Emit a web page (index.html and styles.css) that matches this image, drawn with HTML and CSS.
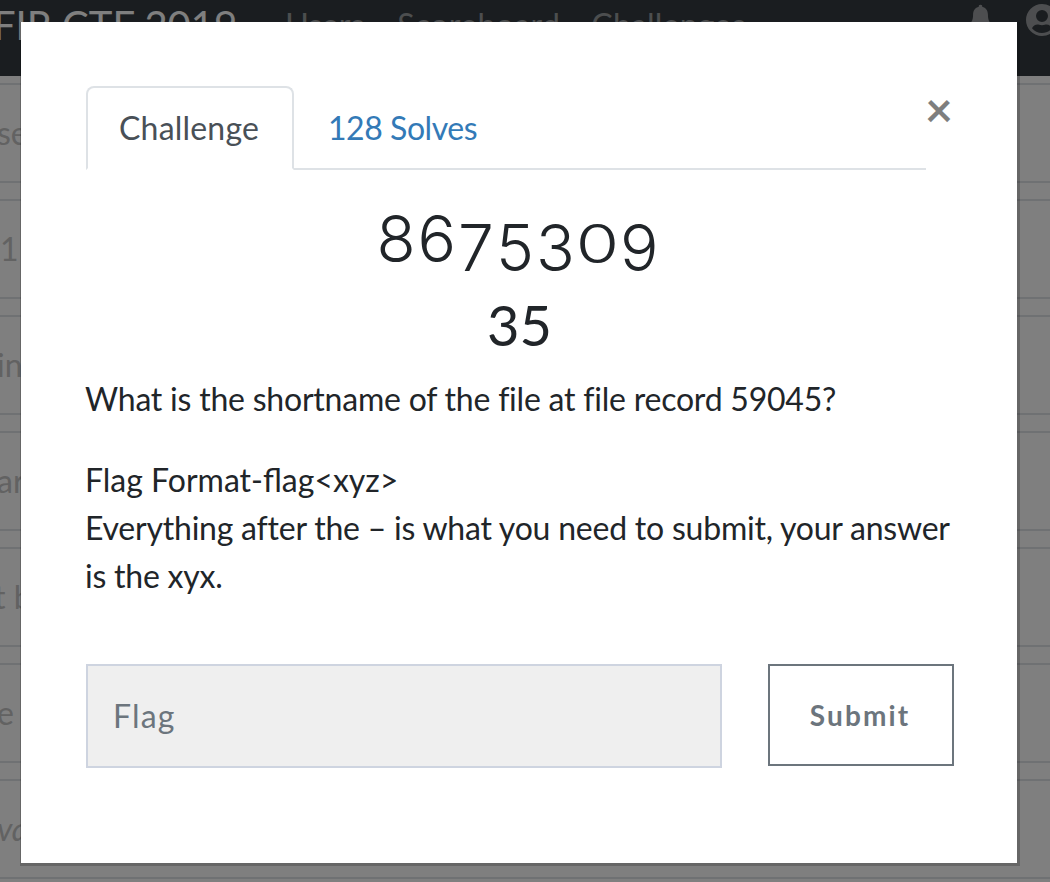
FILE: index.html
```
<!DOCTYPE html>
<html lang="en">
<head>
<meta charset="utf-8">
<title>FIR CTF 2019</title>
<link rel="stylesheet" href="styles.css">
</head>
<body>
<nav class="navbar">
  <span class="brand">FIR CTF 2019</span>
  <a class="nav-link">Users</a>
  <a class="nav-link nav-score">Scoreboard</a>
  <a class="nav-link nav-chal">Challenges</a>
  <span class="nav-icons">
    <svg class="icon-bell" viewBox="0 0 24 28" aria-hidden="true"><path d="M12 0a2 2 0 0 1 2 2.4c4 1 6.500 4.300 6.500 9.100 0 6 1.500 8 3.500 10H0c2-2 3.500-4 3.500-10 0-4.800 2.500-8.100 6.500-9.100A2 2 0 0 1 12 0z"/></svg>
    <svg class="icon-user" viewBox="0 0 32 32" aria-hidden="true"><path fill-rule="evenodd" d="M16 0a16 16 0 1 0 0 32 16 16 0 0 0 0-32zm0 6a6 6 0 1 1 0 12 6 6 0 0 1 0-12zm0 23c-4 0-7.600-1.800-10-4.700 1-2.300 3.200-3.800 5.500-3.800.5 0 1.200.1 1.700.3.900.3 1.800.5 2.800.5s1.900-.2 2.800-.5c.5-.2 1.200-.3 1.700-.3 2.300 0 4.500 1.500 5.500 3.800C23.600 27.200 20 29 16 29z"/></svg>
  </span>
</nav>
<main class="rows">
  <div class="row-first"></div>
  <div class="row"><span class="row-text">se</span></div>
  <div class="row"><span class="row-text row-num">11</span></div>
  <div class="row"><span class="row-text">in</span></div>
  <div class="row"><span class="row-text">ar</span></div>
  <div class="row"><span class="row-text row-tight">t b</span></div>
  <div class="row"><span class="row-text">e</span></div>
  <div class="row"><span class="row-text row-italic">va</span></div>
</main>
<div class="backdrop"></div>
<section class="modal">
  <button class="close" aria-label="Close">&times;</button>
  <ul class="tabs">
    <li class="tab tab-active">Challenge</li>
    <li class="tab tab-link">128 Solves</li>
  </ul>
  <h3 class="title"><span class="d-hi">8</span><span class="d-hi">6</span><span class="d-lo">7</span><span class="d-lo">5</span><span class="d-lo">3</span><span class="d-x">0</span><span class="d-lo">9</span></h3>
  <h4 class="points">35</h4>
  <div class="desc">
    <p>What is the shortname of the file at file record 59045?</p>
    <p><span class="flag-line">Flag Format-flag&lt;xyz&gt;</span><br>Everything after the – is what you need to submit, your answer is the xyx.</p>
  </div>
  <form class="flag-form">
    <input class="flag-input" type="text" placeholder="Flag">
    <button class="submit" type="button">Submit</button>
  </form>
</section>
</body>
</html>
```
FILE: styles.css
```
* { box-sizing: border-box; }
html, body { margin: 0; height: 882px; overflow: hidden; }
body { background: #fff; font-family: Lato, "Liberation Sans", sans-serif; color: #212529; }

.navbar { height: 76px; background: #343a40; display: flex; align-items: flex-start; padding-top: 1px; white-space: nowrap; color: rgba(255,255,255,.5); }
.brand { font-size: 40px; line-height: 48px; margin-left: -7px; color: #fff; }
.nav-link { font-size: 32px; line-height: 48px; }
.brand + .nav-link { margin-left: 48px; }
.nav-link + .nav-link { margin-left: 33px; }
.nav-score { letter-spacing: .4px; }
.nav-link.nav-chal { margin-left: 31px; letter-spacing: .2px; }
.nav-icons { margin-left: auto; display: flex; gap: 35px; margin-right: -8px; padding-top: 3px; }
.icon-bell { width: 21px; height: 26px; fill: currentColor; }
.icon-user { width: 32px; height: 32px; fill: currentColor; }

.rows { display: flex; flex-direction: column; gap: 16px; }
.row { height: 100px; border-top: 2px solid #dee2e6; border-bottom: 2px solid #dee2e6; font-size: 32px; color: #c4c4c4; padding-top: 28px; }
.row-first { height: 7px; margin-bottom: -16px; }
.row-text { display: block; margin-left: -3px; }
.row-num { margin-left: 0; }
.row-tight { margin-left: -6px; }
.row-italic { font-style: italic; }

.backdrop { position: fixed; inset: 0; background: rgba(0,0,0,.5); }
.modal { position: fixed; left: 20px; top: 22px; width: 1000px; height: 844px; background: #fff; background-clip: padding-box; border-right: 3px solid rgba(0,0,0,.2); border-bottom: 3px solid rgba(0,0,0,.2); border-left: 1px solid rgba(0,0,0,.2); padding: 64px 65px 0; }

.close { position: absolute; right: 62px; top: 63px; border: 0; padding: 0; background: none; font: 700 48px/48px Lato, sans-serif; color: #000; opacity: .5; width: 32px; }
.tabs { list-style: none; margin: 0; padding: 0; display: flex; width: 840px; height: 84px; border-bottom: 2px solid #dee2e6; }
.tab { font-size: 32px; line-height: 48px; padding: 16px 32px; height: 84px; border: 2px solid transparent; border-radius: 8px 8px 0 0; }
.tab-active { color: #495057; border-color: #dee2e6 #dee2e6 #fff; width: 208px; padding-left: 31px; letter-spacing: .2px; }
.tab-link { color: #337ab7; padding-left: 32px; letter-spacing: -.45px; }

.title { margin: 30px 0 0; text-align: center; font: 300 64px/77px Inter, Lato, sans-serif; letter-spacing: 2px; width: 865px; }
.d-hi { vertical-align: 4px; }
.d-lo { vertical-align: -5px; }
.d-x { display: inline-block; font-size: 54px; vertical-align: 3px; transform: scaleX(1.3); margin: 0 4px; line-height: 1; }
.points { margin: 5px 0 0; text-align: center; font: 400 56px/67px Lato, sans-serif; width: 867px; }

.desc { margin: 17px 0 0 -1px; font-size: 32px; line-height: 48px; letter-spacing: -.22px; font-variant-ligatures: common-ligatures; width: 870px; }
.desc p { margin: 0 0 33px; }
.flag-line { letter-spacing: 0; }

.flag-form { display: flex; align-items: flex-start; margin-top: 64px; }
.flag-input { flex: none; width: 636px; height: 104px; background: #efefef; border: 2px solid #ced4e0; padding: 0 25px 2px; font: 400 32px Lato, sans-serif; letter-spacing: 1.2px; color: #6c757d; border-radius: 0; }
.flag-input::placeholder { color: #6c757d; opacity: 1; }
.submit { flex: none; margin-left: 46px; width: 186px; height: 102px; background: #fff; border: 2px solid #6c757d; font: 700 28px Lato, sans-serif; letter-spacing: 2.1px; color: #6c757d; border-radius: 0; padding: 0 2px 0 0; }
```
